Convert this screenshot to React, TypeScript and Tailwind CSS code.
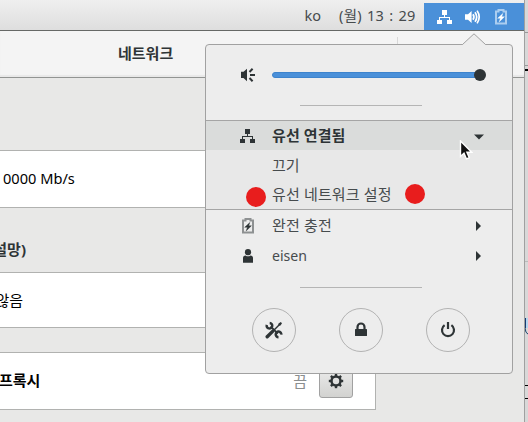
import React from 'react';

const FONT = "font-['Noto_Sans','Noto_Sans_CJK_KR',sans-serif]";

function Network() {
  return (
    <svg width="16" height="16" viewBox="0 0 16 16" fill="currentColor" shapeRendering="crispEdges">
      <path d="M5 1h5v5H5zM0 11h5v4H0zM10 11h5v4h-5zM7 6h1v2H7zM2 8h11v1H2zM2 8h1v3H2zM12 8h1v3h-1z" />
    </svg>
  );
}

function Battery({ bolt }: { bolt: string }) {
  return (
    <svg width="16" height="16" viewBox="0 0 16 16">
      <path d="M5.500 1h5v1.500H13V14.500H3V2.500h2.500z" fill="none" stroke="currentColor" strokeWidth="2" />
      <path d="M9.800 4.500 4.700 9.300h2.700l-1.200 3.600 5.200-5.100H8.700z" fill={bolt} stroke={bolt} strokeWidth=".4" />
    </svg>
  );
}

function SpeakerHigh() {
  return (
    <svg width="16" height="16" viewBox="0 0 16 16" fill="none" stroke="currentColor">
      <path d="M0 5.300h3L6.600 2v12L3 10.700H0z" fill="currentColor" stroke="none" />
      <path d="M8 5.300q1.800 2.700 0 5.400" strokeWidth="1.800" />
      <path d="M10 3.200q3.400 4.800 0 9.600M12.100 1.600q4.200 6.400 0 12.800" strokeWidth="1.700" />
    </svg>
  );
}

function SpeakerRays() {
  return (
    <svg width="16" height="16" viewBox="0 0 16 16" fill="none" stroke="currentColor" strokeWidth="2">
      <path d="M1 4.700h2.500L7 1.800v12.400L3.500 11H1z" fill="currentColor" stroke="none" />
      <path d="M10 8h5M9.500 5l3.100-3.200M9.500 11l3.100 3.200" />
    </svg>
  );
}

function Person() {
  return (
    <svg width="16" height="16" viewBox="0 0 16 16" fill="#2e3436">
      <circle cx="8" cy="4.200" r="3.100" />
      <path d="M3 14.700V10q0-2.500 2.600-2.500Q8 9.200 10.400 7.500 13 7.500 13 10v4.700z" />
    </svg>
  );
}

function Tools() {
  return (
    <svg width="18" height="18" viewBox="0 0 18 18" fill="none" stroke="currentColor">
      <path d="M2.200 15.800 7.600 10.400" strokeWidth="3.400" strokeLinecap="round" />
      <path d="m7.800 10.200 6.500-6.500" strokeWidth="1.400" />
      <path d="m13.500 2.500 2.300-1.400 1.200 1.200-1.500 2.200-1.700.3-.6-.6z" fill="currentColor" stroke="none" />
      <path d="m5.600 5.500 7.200 7.100" strokeWidth="1.900" />
      <path d="M1.800 3.800A2.800 2.800 0 1 0 4.700 1.900M16.300 13.700a2.800 2.800 0 1 0-2.800 2.500" strokeWidth="2.500" />
    </svg>
  );
}

function Lock() {
  return (
    <svg width="16" height="16" viewBox="0 0 16 16">
      <path d="M4.500 8V5a3.500 3.500 0 0 1 7 0v3" fill="none" stroke="currentColor" strokeWidth="2.200" />
      <rect x="2" y="7" width="12" height="7" rx=".5" fill="currentColor" />
    </svg>
  );
}

function Power() {
  return (
    <svg width="16" height="16" viewBox="0 0 16 16" fill="none" stroke="currentColor" strokeWidth="2.200">
      <path d="M4.600 3.200a6 6 0 1 0 6.800 0M8 0v7" />
    </svg>
  );
}

const teeth = [0, 45, 90, 135, 180, 225, 270, 315];

function Gear() {
  return (
    <svg width="16" height="16" viewBox="0 0 16 16">
      <circle cx="8" cy="8" r="4.500" fill="none" stroke="currentColor" strokeWidth="2.500" />
      {teeth.map((a) => (
        <rect key={a} x="6.800" y=".8" width="2.400" height="3" fill="currentColor" transform={`rotate(${a} 8 8)`} />
      ))}
    </svg>
  );
}

function Row({ icon, label, arrow, className = '' }: { icon?: React.ReactNode; label: string; arrow?: 'down' | 'right'; className?: string }) {
  return (
    <div className={`flex items-center pl-[34px] ${className}`}>
      <span className="mr-4 flex h-4 w-4">{icon}</span>
      <span className="grow whitespace-nowrap">{label}</span>
      {arrow === 'down' && (
        <svg width="10" height="6" viewBox="0 0 10 6" className="mr-[28px] mt-[3px]"><path d="M0 .5h10L5 5.500z" fill="#2e3436" /></svg>
      )}
      {arrow === 'right' && (
        <svg width="8" height="10" viewBox="0 0 8 10" className="mr-[29px]"><path d="M1 0v10l5-5z" fill="#2e3436" /></svg>
      )}
    </div>
  );
}

function Menu() {
  return (
    <div className="absolute left-[205px] top-[44px] h-[330px] w-[308px] rounded-[4px] border border-[#a1a1a1] bg-[#ededed] text-[15px] text-[#464b4d]">
      <svg className="absolute left-[255px] top-[-12px]" width="26" height="13" viewBox="0 0 26 13">
        <path d="M1 12 13 .8 25 12v1H1z" fill="#ededed" />
        <path d="M0 11.500h1.500L13 .8l11.500 10.700H26" fill="none" stroke="#a1a1a1" />
      </svg>
      <div className="flex h-[60px] items-center pl-[34px]">
        <span className="mr-4 text-[#2e3436]"><SpeakerRays /></span>
        <div className="flex h-1.5 w-[208px] items-center justify-end rounded-full border border-[#3d83cc] bg-[#4a90d9]">
          <span className="-mr-[7px] h-3 w-3 shrink-0 rounded-full bg-[#2e3436]" />
        </div>
      </div>
      <div className="ml-[94px] h-px w-[122px] bg-[#b5b5b5]" />
      <div className="mt-[14px] h-[90px] border-y border-[#a5a5a5] bg-[#e8e8e8]">
        <Row icon={<Network />} label="유선 연결됨" arrow="down" className="h-[29px] bg-[#dadcdb] font-bold tracking-[0.100px] text-[#2e3436]" />
        <Row label="끄기" className="h-[30px]" />
        <Row label="유선 네트워크 설정" className="h-[29px] tracking-[0.150px]" />
      </div>
      <Row icon={<span className="text-[#8e9192]"><Battery bolt="#2e3436" /></span>} label="완전 충전" arrow="right" className="h-[31px] tracking-[0.150px]" />
      <Row icon={<Person />} label="eisen" arrow="right" className="h-[30px] text-[14.100px]" />
      <div className="ml-[94px] mt-4 h-px w-[122px] bg-[#b5b5b5]" />
      <div className="mt-5 flex gap-[43px] pl-[46px] text-[#2e3436]">
        {[<Tools />, <Lock />, <Power />].map((icon, i) => (
          <button key={i} className="flex h-[44px] w-[44px] items-center justify-center rounded-full border border-[#b3b3b3]">{icon}</button>
        ))}
      </div>
    </div>
  );
}

export default function App() {
  return (
    <div className={`relative flex h-[422px] w-[528px] overflow-hidden bg-[#e8e8e7] text-[15px] text-[#2e3436] ${FONT}`}>
      <div className="flex w-[524px] flex-col">
        <header className="flex h-[31px] shrink-0 items-end justify-end border-b border-[#666866] bg-gradient-to-b from-[#efefef] to-[#dedede]">
          <div className="flex h-[27px] items-center pb-0.5 text-[14.500px] text-[#464b4d]">
            <span className="mr-[18px]">ko</span>
            <span className="mr-[7px] w-[78px] whitespace-pre tracking-[0.300px] [word-spacing:1px]">(월) 13 : 29</span>
          </div>
          <div className="flex h-[27px] w-[100px] items-center gap-3 bg-[#4a90d9] pl-[13px] text-white">
            <Network />
            <SpeakerHigh />
            <span className="text-[#abcdf0]"><Battery bolt="#fff" /></span>
          </div>
        </header>
        <div className="flex h-[47px] shrink-0 items-center border-b border-[#929492] bg-[#f4f4f4] shadow-[inset_0_-2px_1px_#e8e8e8]">
          <h1 className="w-[397px] pb-0.5 pl-[118px] font-bold leading-[44px]">네트워크</h1>
          <div className="mb-[13px] h-[22px] w-px bg-[#d8d8d8]" />
        </div>
        <main className="flex w-[376px] grow flex-col whitespace-nowrap text-black">
          <div className="mt-[72px] flex h-[58px] items-center border border-l-0 border-[#b1b2b0] bg-white pl-[3px] text-[14.600px]">0000 Mb/s</div>
          <div className="flex h-[64px] w-[26px] items-end justify-end pb-[12px] font-bold text-[#2e3436]">설망)</div>
          <div className="flex h-[56px] items-center border border-l-0 border-[#b1b2b0] bg-white">
            <div className="flex w-[23px] justify-end">않음</div>
          </div>
          <div className="mt-6 flex h-[58px] items-center border border-l-0 border-[#b1b2b0] bg-white">
            <span className="-ml-px grow pb-0.5 font-bold">프록시</span>
            <span className="mr-3 text-[#8b8e8f]">끔</span>
            <button className="mr-[22px] flex h-[34px] w-[34px] items-center justify-center rounded-[3px] border border-[#a1a1a1] bg-gradient-to-b from-[#eee] to-[#d2d2d0] text-[#2e3436]"><Gear /></button>
          </div>
        </main>
      </div>
      <aside className="flex w-1 flex-col border-l border-[#a0a0a0] bg-[#d8d8d8]">
        <div className="h-[32px]" />
        <div className="h-px bg-[#999]" />
        <div className="h-[32px]" />
        <div className="h-px bg-[#999]" />
        <div className="h-[3px]" />
        <div className="h-[2px] bg-black" />
        <div className="h-[190px]" />
        <div className="h-px bg-[#bbb]" />
        <div className="h-[56px]" />
        <div className="h-[10px] border-l border-[#173b70] bg-[#b5d5ef]" />
        <svg className="shrink-0" width="4" height="8"><path d="M0 0q0 5 4 7" fill="none" stroke="#17406b" /></svg>
        <div className="mt-[49px] h-[14px] border-y border-black" />
      </aside>
      <Menu />
      <span className="absolute left-[246px] top-[187px] h-5 w-5 rounded-full bg-[#e81d1d]" />
      <span className="absolute left-[405px] top-[184px] h-5 w-5 rounded-full bg-[#e81d1d]" />
      <svg className="absolute left-[459px] top-[140px]" width="14" height="20" viewBox="0 0 14 20">
        <path d="M1.500 1v15.500l3.500-3.200 2.400 5.500 2.900-1.200-2.400-5.300h4.800z" fill="#111" stroke="#fff" strokeWidth="1.400" />
      </svg>
    </div>
  );
}
